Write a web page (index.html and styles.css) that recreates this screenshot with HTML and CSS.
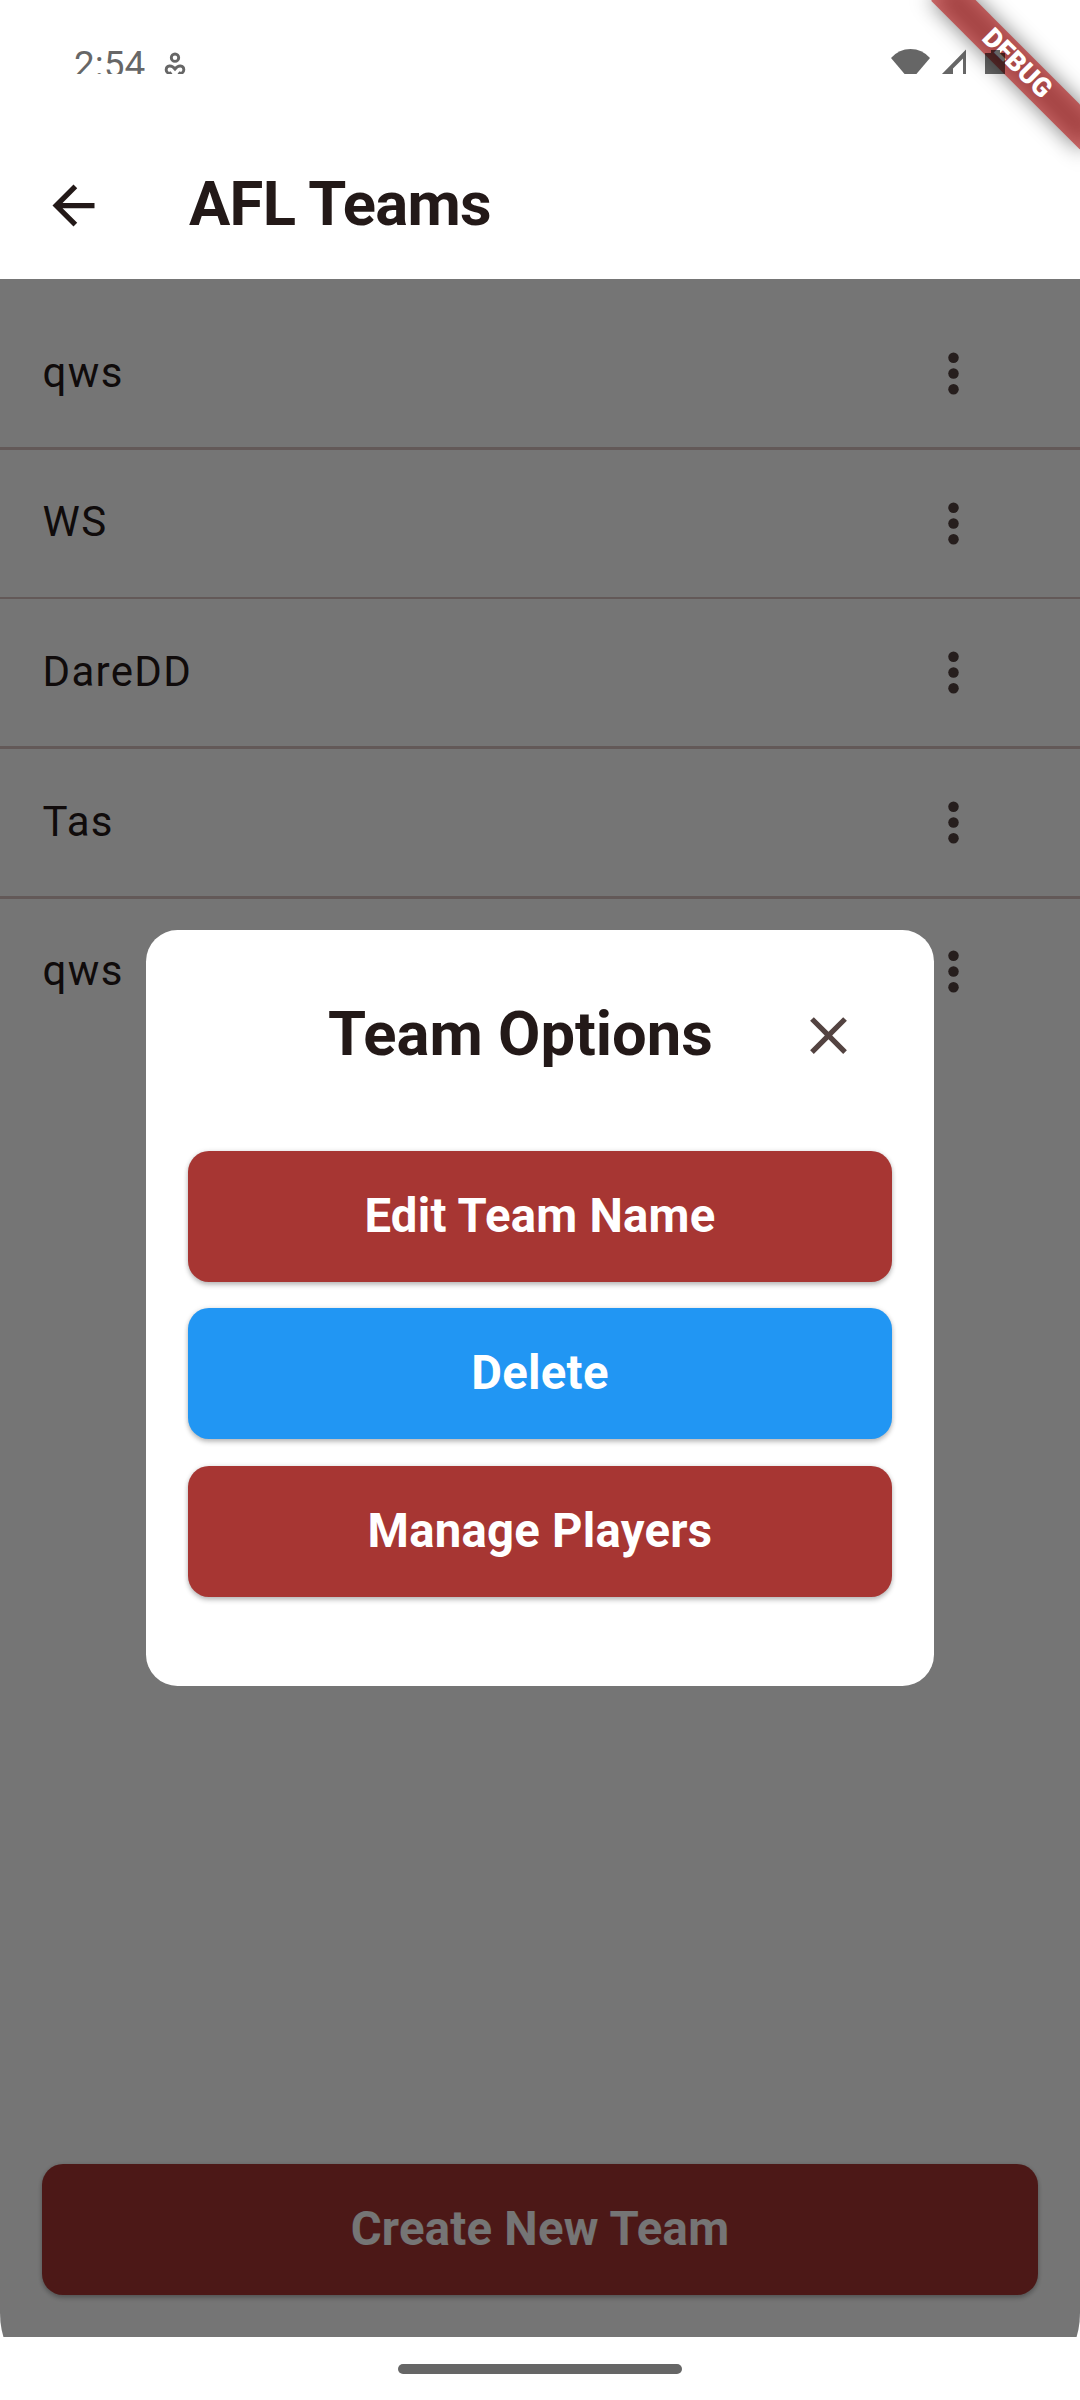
FILE: index.html
```html
<!DOCTYPE html>
<html lang="en">
<head>
<meta charset="utf-8">
<title>AFL Teams</title>
<link rel="stylesheet" href="styles.css">
</head>
<body>
<div class="screen">
  <header class="app-bar">
    <svg class="icon" viewBox="0 0 24 24"><path d="M20 11H7.83l5.59-5.59L12 4l-8 8 8 8 1.41-1.41L7.83 13H20v-2z"/></svg>
    <h1 class="app-title">AFL Teams</h1>
  </header>

  <main class="content">
    <ul class="team-list">
      <li class="team"><span>qws</span><svg class="icon" viewBox="0 0 24 24"><circle cx="12" cy="6" r="2"/><circle cx="12" cy="12" r="2"/><circle cx="12" cy="18" r="2"/></svg></li>
      <li class="team"><span>WS</span><svg class="icon" viewBox="0 0 24 24"><circle cx="12" cy="6" r="2"/><circle cx="12" cy="12" r="2"/><circle cx="12" cy="18" r="2"/></svg></li>
      <li class="team"><span>DareDD</span><svg class="icon" viewBox="0 0 24 24"><circle cx="12" cy="6" r="2"/><circle cx="12" cy="12" r="2"/><circle cx="12" cy="18" r="2"/></svg></li>
      <li class="team"><span>Tas</span><svg class="icon" viewBox="0 0 24 24"><circle cx="12" cy="6" r="2"/><circle cx="12" cy="12" r="2"/><circle cx="12" cy="18" r="2"/></svg></li>
      <li class="team"><span>qws</span><svg class="icon" viewBox="0 0 24 24"><circle cx="12" cy="6" r="2"/><circle cx="12" cy="12" r="2"/><circle cx="12" cy="18" r="2"/></svg></li>
    </ul>
    <button class="button button-create">Create New Team</button>

    <div class="scrim">
      <section class="dialog">
        <div class="dialog-head">
          <h2 class="dialog-title">Team Options</h2>
          <svg class="icon icon-close" viewBox="0 0 24 24"><path d="M19 6.41L17.59 5 12 10.59 6.41 5 5 6.41 10.59 12 5 17.59 6.41 19 12 13.41 17.59 19 19 17.59 13.41 12z"/></svg>
        </div>
        <div class="dialog-actions">
          <button class="button">Edit Team Name</button>
          <button class="button button-delete">Delete</button>
          <button class="button">Manage Players</button>
        </div>
      </section>
    </div>
  </main>

  <footer class="nav-bar"><div class="home-handle"></div></footer>

  <div class="banner"><span class="banner-label">DEBUG</span></div>

  <div class="status-bar">
    <span class="clock">2:54</span>
    <svg class="status-person" width="22" height="26" viewBox="0 0 22 26"><g fill="none" stroke="currentColor" stroke-width="2.9"><circle cx="11" cy="5.700" r="3.700"/><path d="M7.500 20.500C5 22.500 2 20.500 2.200 17.500C2.500 13.500 7.500 12.500 11 17C14.500 12.500 19.500 13.500 19.800 17.500C20 20.500 17 22.500 14.500 20.500"/></g></svg>
    <svg class="status-system" width="120" height="30" viewBox="0 0 120 30" fill="currentColor"><path d="M0 10Q8 1 19.500 1T39 10L19.500 33Z"/><path fill-rule="evenodd" d="M50 27L75 1.500V27ZM62 27H72V10.500L62 20.500Z"/><path d="M94 5H100V2H109V5H114V27H94Z"/></svg>
  </div>
</div>
</body>
</html>
```
FILE: styles.css
```css
* { box-sizing: border-box; }

html { background: #fff; }

body {
  margin: 0;
  font-family: Roboto, sans-serif;
  color: #231918;
}

h1, h2, ul { margin: 0; padding: 0; }

.screen {
  position: relative;
  display: flex;
  flex-direction: column;
  width: 1080px;
  height: 2400px;
  overflow: hidden;
  border-radius: 0 0 87px 87px;
  background: #fff;
}

.icon {
  flex: none;
  width: 63px;
  height: 63px;
  fill: currentColor;
}

/* App bar */
.app-bar {
  display: flex;
  align-items: center;
  gap: 84px;
  height: 279px;
  padding: 132px 42px 0;
}

.app-title,
.dialog-title {
  padding-bottom: 2px;
  font-size: 61.5px;
  font-weight: 700;
  line-height: 74px;
  white-space: nowrap;
}

.app-title {
  padding-bottom: 4px;
  letter-spacing: -.72px;
}

/* Team list */
.content {
  position: relative;
  display: flex;
  flex: 1;
  flex-direction: column;
  justify-content: space-between;
  padding: 21px 0 42px;
}

.team-list { list-style: none; }

.team {
  display: flex;
  align-items: center;
  justify-content: space-between;
  height: 149.625px;
  padding: 0 94.8px 0 42.6px;
  border-bottom: 3px solid #d8c2bf;
  font-size: 42px;
  letter-spacing: 1.3px;
}

.team span { padding-bottom: 2px; }

.team:nth-child(2) { border-bottom-width: 2px; }

.team:nth-child(2) span { padding-bottom: 4px; }

.team:last-child { border-color: transparent; }

.team .icon { color: #534341; }

/* Buttons */
.button {
  height: 131.25px;
  padding: 0;
  border: 0;
  border-radius: 21px;
  background: #a73633;
  box-shadow: 0 3px 5px rgba(0, 0, 0, .24), 0 0 5px rgba(0, 0, 0, .1);
  color: #fff;
  font: 700 47.25px/56px Roboto, sans-serif;
  letter-spacing: .2625px;
}

.button-create { margin: 0 42px; }

.button-delete {
  padding-bottom: 2px;
  background: #2196f3;
}

/* Dialog */
.scrim {
  position: absolute;
  inset: 0;
  display: flex;
  align-items: center;
  justify-content: center;
  background: rgba(0, 0, 0, .54);
}

.dialog {
  width: 788px;
  height: 756px;
  padding: 42px;
  border-radius: 31.5px;
  background: #fff;
}

.dialog-head {
  display: flex;
  align-items: center;
  justify-content: space-between;
  height: 126px;
  margin-bottom: 52.5px;
  padding: 0 32px 0 140px;
}

.icon-close { color: #534341; }

.dialog-actions {
  display: flex;
  flex-direction: column;
  gap: 26.25px;
}

/* System navigation */
.nav-bar {
  display: flex;
  justify-content: center;
  height: 63px;
  padding-top: 27px;
  background: #fff;
}

.home-handle {
  width: 284px;
  height: 10px;
  border-radius: 5px;
  background: #666;
}

/* Corner ribbon, turned about the top right corner of the screen */
.banner {
  position: absolute;
  top: 73.5px;
  right: -105px;
  width: 210px;
  height: 31.5px;
  transform: rotate(45deg);
  transform-origin: 105px -73.5px;
}

.banner::before {
  content: "";
  position: absolute;
  inset: 0;
  background: rgba(0, 0, 0, .5);
  filter: blur(10.4px);
}

.banner-label {
  position: relative;
  display: block;
  background: rgba(183, 28, 28, .627);
  color: #fff;
  font-size: 26.775px;
  font-weight: 900;
  line-height: 31.5px;
  text-align: center;
}

/* Status bar, cut off at its lower edge */
.status-bar {
  position: absolute;
  inset: 0 0 auto;
  display: flex;
  align-items: flex-start;
  height: 74px;
  padding: 48px 69px 0 74px;
  overflow: hidden;
  color: rgba(0, 0, 0, .6);
}

.clock {
  font-size: 37px;
  line-height: 34px;
}

.status-person { margin: 4px 0 0 18.5px; }

.status-system { margin-left: auto; }
```
